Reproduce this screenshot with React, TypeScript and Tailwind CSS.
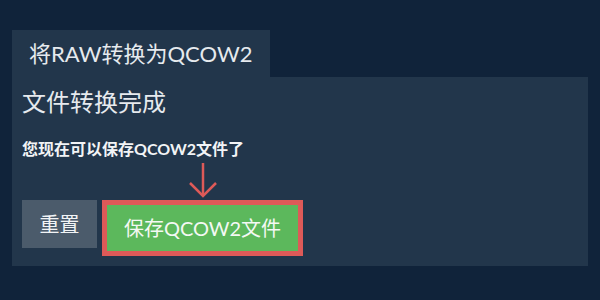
export default function App() {
  return (
    <div
      className="h-[300px] w-[600px] bg-[#10233a] px-3 pt-[30px]"
      style={{ fontFamily: 'Lato, "Noto Sans CJK SC", sans-serif' }}
    >
      <div className="flex">
        <div className="flex h-[47px] items-center whitespace-nowrap bg-[#22364b] pl-[17px] pr-[18px] text-[22px] text-[#e6eaee]">
          将RAW转换为QCOW2
        </div>
      </div>
      <div className="h-[189px] bg-[#22364b] px-[10px] pt-[9px]">
        <h2 className="text-[24px] leading-8 font-normal text-[#e6eaee]">
          文件转换完成
        </h2>
        <p className="mt-[19px] text-[16px] leading-6 font-bold text-[#f2f4f6]">
          您现在可以保存QCOW2文件了
        </p>
        <div className="mt-[39px] flex items-start gap-[5px]">
          <button className="h-[48px] w-[75px] bg-[#4b5b6b] text-[20px] text-[#f2f4f6]">
            重置
          </button>
          <div className="relative">
            <svg
              className="absolute -top-[38px] left-1/2 -translate-x-1/2"
              width="30"
              height="36"
              viewBox="0 0 30 36"
              fill="none"
              stroke="#de5a58"
              strokeWidth="2.5"
            >
              <path d="M15 1 V34" />
              <path d="M2 21 L15 34 L28 21" />
            </svg>
            <button className="h-[56px] w-[201px] whitespace-nowrap border-[5px] border-[#de5a58] bg-[#5cb85c] text-[20px] text-[#f4f8f4]">
              保存QCOW2文件
            </button>
          </div>
        </div>
      </div>
    </div>
  );
}
